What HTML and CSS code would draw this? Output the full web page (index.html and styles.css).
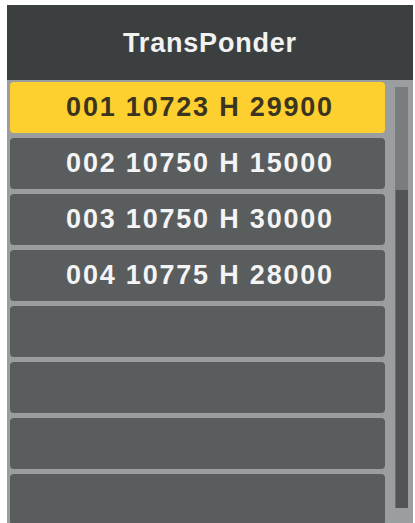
FILE: index.html
```html
<!DOCTYPE html>
<html>
<head>
<meta charset="utf-8">
<link rel="stylesheet" href="styles.css">
</head>
<body>
<div class="panel">
  <div class="header"><span class="title">TransPonder</span></div>
  <div class="content">
    <div class="list">
      <div class="row selected">001 10723 H 29900</div>
      <div class="row">002 10750 H 15000</div>
      <div class="row">003 10750 H 30000</div>
      <div class="row">004 10775 H 28000</div>
      <div class="row"></div>
      <div class="row"></div>
      <div class="row"></div>
      <div class="row"></div>
    </div>
    <div class="scrollbar">
      <div class="thumb"></div>
    </div>
  </div>
</div>
</body>
</html>
```
FILE: styles.css
```css
html, body {
  margin: 0;
  padding: 0;
  background: #ffffff;
}
body {
  width: 415px;
  height: 523px;
  overflow: hidden;
  font-family: "Liberation Sans", Arial, sans-serif;
}
.panel {
  margin: 5px 0 0 7px;
  width: 406px;
  height: 518px;
  background: #9b9e9e;
  overflow: hidden;
}
.header {
  height: 75px;
  background: #3b3f3f;
  display: flex;
  align-items: center;
  justify-content: center;
}
.title {
  color: #f2f2f2;
  font-weight: bold;
  font-size: 27px;
  letter-spacing: 0.8px;
  margin-top: 1px;
}
.content {
  display: flex;
  padding: 2px 0 0 3px;
}
.list {
  width: 375px;
  display: flex;
  flex-direction: column;
  gap: 5px;
}
.row {
  height: 51px;
  background: #595d5e;
  border-radius: 4px;
  display: flex;
  align-items: center;
  justify-content: center;
  color: #f4f4f4;
  font-weight: bold;
  font-size: 27px;
  letter-spacing: 1.8px;
  padding-left: 5px;
  box-sizing: border-box;
}
.row.selected {
  background: #fdd02f;
  color: #3a3421;
}
.scrollbar {
  margin: 5px 0 0 10px;
  width: 13px;
  height: 421px;
  background: #515555;
  box-shadow: inset 1px 0 0 #6e7171;
}
.thumb {
  height: 103px;
  background: #7a7d7e;
}
```
